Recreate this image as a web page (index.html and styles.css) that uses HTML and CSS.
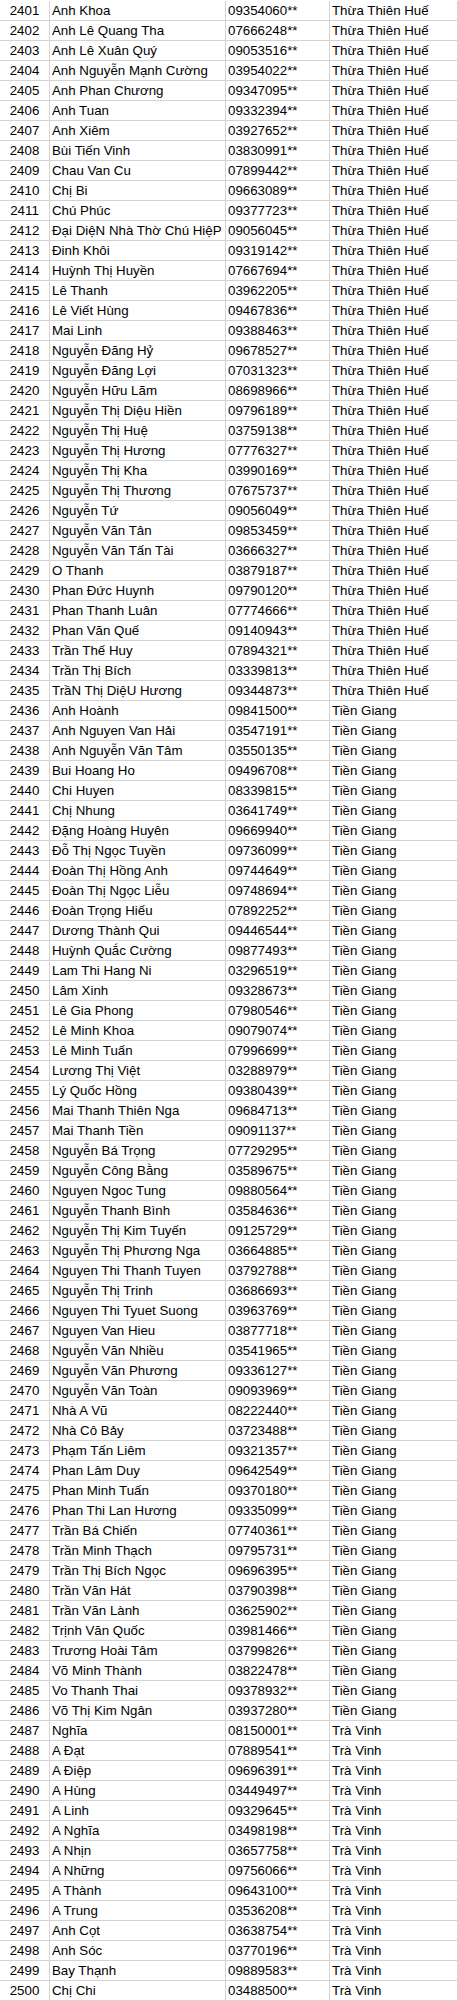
FILE: index.html
```html
<!DOCTYPE html>
<html lang="vi">
<head>
<meta charset="utf-8">
<title>Danh sách</title>
<link rel="stylesheet" href="styles.css">
</head>
<body>
<table class="sheet">
<colgroup><col class="c-no"><col class="c-name"><col class="c-phone"><col class="c-prov"></colgroup>
<tbody id="rows">
<tr><td class="no">2401</td><td>Anh Khoa</td><td>09354060**</td><td>Thừa Thiên Huế</td></tr>
<tr><td class="no">2402</td><td>Anh Lê Quang Tha</td><td>07666248**</td><td>Thừa Thiên Huế</td></tr>
<tr><td class="no">2403</td><td>Anh Lê Xuân Quý</td><td>09053516**</td><td>Thừa Thiên Huế</td></tr>
<tr><td class="no">2404</td><td>Anh Nguyễn Mạnh Cường</td><td>03954022**</td><td>Thừa Thiên Huế</td></tr>
<tr><td class="no">2405</td><td>Anh Phan Chương</td><td>09347095**</td><td>Thừa Thiên Huế</td></tr>
<tr><td class="no">2406</td><td>Anh Tuan</td><td>09332394**</td><td>Thừa Thiên Huế</td></tr>
<tr><td class="no">2407</td><td>Anh Xiêm</td><td>03927652**</td><td>Thừa Thiên Huế</td></tr>
<tr><td class="no">2408</td><td>Bùi Tiến Vinh</td><td>03830991**</td><td>Thừa Thiên Huế</td></tr>
<tr><td class="no">2409</td><td>Chau Van Cu</td><td>07899442**</td><td>Thừa Thiên Huế</td></tr>
<tr><td class="no">2410</td><td>Chị Bi</td><td>09663089**</td><td>Thừa Thiên Huế</td></tr>
<tr><td class="no">2411</td><td>Chú Phúc</td><td>09377723**</td><td>Thừa Thiên Huế</td></tr>
<tr><td class="no">2412</td><td>Đại DiệN Nhà Thờ Chú HiệP</td><td>09056045**</td><td>Thừa Thiên Huế</td></tr>
<tr><td class="no">2413</td><td>Đinh Khôi</td><td>09319142**</td><td>Thừa Thiên Huế</td></tr>
<tr><td class="no">2414</td><td>Huỳnh Thị Huyền</td><td>07667694**</td><td>Thừa Thiên Huế</td></tr>
<tr><td class="no">2415</td><td>Lê Thanh</td><td>03962205**</td><td>Thừa Thiên Huế</td></tr>
<tr><td class="no">2416</td><td>Lê Viết Hùng</td><td>09467836**</td><td>Thừa Thiên Huế</td></tr>
<tr><td class="no">2417</td><td>Mai Linh</td><td>09388463**</td><td>Thừa Thiên Huế</td></tr>
<tr><td class="no">2418</td><td>Nguyễn Đăng Hỷ</td><td>09678527**</td><td>Thừa Thiên Huế</td></tr>
<tr><td class="no">2419</td><td>Nguyễn Đăng Lợi</td><td>07031323**</td><td>Thừa Thiên Huế</td></tr>
<tr><td class="no">2420</td><td>Nguyễn Hữu Lãm</td><td>08698966**</td><td>Thừa Thiên Huế</td></tr>
<tr><td class="no">2421</td><td>Nguyễn Thị Diệu Hiền</td><td>09796189**</td><td>Thừa Thiên Huế</td></tr>
<tr><td class="no">2422</td><td>Nguyễn Thị Huệ</td><td>03759138**</td><td>Thừa Thiên Huế</td></tr>
<tr><td class="no">2423</td><td>Nguyễn Thị Hương</td><td>07776327**</td><td>Thừa Thiên Huế</td></tr>
<tr><td class="no">2424</td><td>Nguyễn Thị Kha</td><td>03990169**</td><td>Thừa Thiên Huế</td></tr>
<tr><td class="no">2425</td><td>Nguyễn Thị Thương</td><td>07675737**</td><td>Thừa Thiên Huế</td></tr>
<tr><td class="no">2426</td><td>Nguyễn Tứ</td><td>09056049**</td><td>Thừa Thiên Huế</td></tr>
<tr><td class="no">2427</td><td>Nguyễn Văn Tân</td><td>09853459**</td><td>Thừa Thiên Huế</td></tr>
<tr><td class="no">2428</td><td>Nguyễn Văn Tấn Tài</td><td>03666327**</td><td>Thừa Thiên Huế</td></tr>
<tr><td class="no">2429</td><td>O Thanh</td><td>03879187**</td><td>Thừa Thiên Huế</td></tr>
<tr><td class="no">2430</td><td>Phan Đức Huynh</td><td>09790120**</td><td>Thừa Thiên Huế</td></tr>
<tr><td class="no">2431</td><td>Phan Thanh Luân</td><td>07774666**</td><td>Thừa Thiên Huế</td></tr>
<tr><td class="no">2432</td><td>Phan Văn Quế</td><td>09140943**</td><td>Thừa Thiên Huế</td></tr>
<tr><td class="no">2433</td><td>Trần Thế Huy</td><td>07894321**</td><td>Thừa Thiên Huế</td></tr>
<tr><td class="no">2434</td><td>Trần Thị Bích</td><td>03339813**</td><td>Thừa Thiên Huế</td></tr>
<tr><td class="no">2435</td><td>TrầN Thị DiệU Hương</td><td>09344873**</td><td>Thừa Thiên Huế</td></tr>
<tr><td class="no">2436</td><td>Anh Hoành</td><td>09841500**</td><td>Tiền Giang</td></tr>
<tr><td class="no">2437</td><td>Anh Nguyen Van Hải</td><td>03547191**</td><td>Tiền Giang</td></tr>
<tr><td class="no">2438</td><td>Anh Nguyễn Văn Tâm</td><td>03550135**</td><td>Tiền Giang</td></tr>
<tr><td class="no">2439</td><td>Bui Hoang Ho</td><td>09496708**</td><td>Tiền Giang</td></tr>
<tr><td class="no">2440</td><td>Chi Huyen</td><td>08339815**</td><td>Tiền Giang</td></tr>
<tr><td class="no">2441</td><td>Chị Nhung</td><td>03641749**</td><td>Tiền Giang</td></tr>
<tr><td class="no">2442</td><td>Đặng Hoàng Huyên</td><td>09669940**</td><td>Tiền Giang</td></tr>
<tr><td class="no">2443</td><td>Đỗ Thị Ngọc Tuyền</td><td>09736099**</td><td>Tiền Giang</td></tr>
<tr><td class="no">2444</td><td>Đoàn Thị Hồng Anh</td><td>09744649**</td><td>Tiền Giang</td></tr>
<tr><td class="no">2445</td><td>Đoàn Thị Ngọc Liễu</td><td>09748694**</td><td>Tiền Giang</td></tr>
<tr><td class="no">2446</td><td>Đoàn Trọng Hiếu</td><td>07892252**</td><td>Tiền Giang</td></tr>
<tr><td class="no">2447</td><td>Dương Thành Qui</td><td>09446544**</td><td>Tiền Giang</td></tr>
<tr><td class="no">2448</td><td>Huỳnh Quắc Cường</td><td>09877493**</td><td>Tiền Giang</td></tr>
<tr><td class="no">2449</td><td>Lam Thi Hang Ni</td><td>03296519**</td><td>Tiền Giang</td></tr>
<tr><td class="no">2450</td><td>Lâm Xinh</td><td>09328673**</td><td>Tiền Giang</td></tr>
<tr><td class="no">2451</td><td>Lê Gia Phong</td><td>07980546**</td><td>Tiền Giang</td></tr>
<tr><td class="no">2452</td><td>Lê Minh Khoa</td><td>09079074**</td><td>Tiền Giang</td></tr>
<tr><td class="no">2453</td><td>Lê Minh Tuấn</td><td>07996699**</td><td>Tiền Giang</td></tr>
<tr><td class="no">2454</td><td>Lương Thị Việt</td><td>03288979**</td><td>Tiền Giang</td></tr>
<tr><td class="no">2455</td><td>Lý Quốc Hồng</td><td>09380439**</td><td>Tiền Giang</td></tr>
<tr><td class="no">2456</td><td>Mai Thanh Thiên Nga</td><td>09684713**</td><td>Tiền Giang</td></tr>
<tr><td class="no">2457</td><td>Mai Thanh Tiền</td><td>09091137**</td><td>Tiền Giang</td></tr>
<tr><td class="no">2458</td><td>Nguyễn Bá Trọng</td><td>07729295**</td><td>Tiền Giang</td></tr>
<tr><td class="no">2459</td><td>Nguyễn Công Bằng</td><td>03589675**</td><td>Tiền Giang</td></tr>
<tr><td class="no">2460</td><td>Nguyen Ngoc Tung</td><td>09880564**</td><td>Tiền Giang</td></tr>
<tr><td class="no">2461</td><td>Nguyễn Thanh Bình</td><td>03584636**</td><td>Tiền Giang</td></tr>
<tr><td class="no">2462</td><td>Nguyễn Thị Kim Tuyến</td><td>09125729**</td><td>Tiền Giang</td></tr>
<tr><td class="no">2463</td><td>Nguyễn Thị Phương Nga</td><td>03664885**</td><td>Tiền Giang</td></tr>
<tr><td class="no">2464</td><td>Nguyen Thi Thanh Tuyen</td><td>03792788**</td><td>Tiền Giang</td></tr>
<tr><td class="no">2465</td><td>Nguyễn Thị Trinh</td><td>03686693**</td><td>Tiền Giang</td></tr>
<tr><td class="no">2466</td><td>Nguyen Thi Tyuet Suong</td><td>03963769**</td><td>Tiền Giang</td></tr>
<tr><td class="no">2467</td><td>Nguyen Van Hieu</td><td>03877718**</td><td>Tiền Giang</td></tr>
<tr><td class="no">2468</td><td>Nguyễn Văn Nhiều</td><td>03541965**</td><td>Tiền Giang</td></tr>
<tr><td class="no">2469</td><td>Nguyễn Văn Phương</td><td>09336127**</td><td>Tiền Giang</td></tr>
<tr><td class="no">2470</td><td>Nguyễn Văn Toàn</td><td>09093969**</td><td>Tiền Giang</td></tr>
<tr><td class="no">2471</td><td>Nhà A Vũ</td><td>08222440**</td><td>Tiền Giang</td></tr>
<tr><td class="no">2472</td><td>Nhà Cô Bảy</td><td>03723488**</td><td>Tiền Giang</td></tr>
<tr><td class="no">2473</td><td>Phạm Tấn Liêm</td><td>09321357**</td><td>Tiền Giang</td></tr>
<tr><td class="no">2474</td><td>Phan Lâm Duy</td><td>09642549**</td><td>Tiền Giang</td></tr>
<tr><td class="no">2475</td><td>Phan Minh Tuấn</td><td>09370180**</td><td>Tiền Giang</td></tr>
<tr><td class="no">2476</td><td>Phan Thi Lan Hương</td><td>09335099**</td><td>Tiền Giang</td></tr>
<tr><td class="no">2477</td><td>Trần Bá Chiến</td><td>07740361**</td><td>Tiền Giang</td></tr>
<tr><td class="no">2478</td><td>Trần Minh Thạch</td><td>09795731**</td><td>Tiền Giang</td></tr>
<tr><td class="no">2479</td><td>Trần Thị Bích Ngọc</td><td>09696395**</td><td>Tiền Giang</td></tr>
<tr><td class="no">2480</td><td>Trần Văn Hát</td><td>03790398**</td><td>Tiền Giang</td></tr>
<tr><td class="no">2481</td><td>Trần Văn Lành</td><td>03625902**</td><td>Tiền Giang</td></tr>
<tr><td class="no">2482</td><td>Trịnh Văn Quốc</td><td>03981466**</td><td>Tiền Giang</td></tr>
<tr><td class="no">2483</td><td>Trương Hoài Tâm</td><td>03799826**</td><td>Tiền Giang</td></tr>
<tr><td class="no">2484</td><td>Võ Minh Thành</td><td>03822478**</td><td>Tiền Giang</td></tr>
<tr><td class="no">2485</td><td>Vo Thanh Thai</td><td>09378932**</td><td>Tiền Giang</td></tr>
<tr><td class="no">2486</td><td>Võ Thị Kim Ngân</td><td>03937280**</td><td>Tiền Giang</td></tr>
<tr><td class="no">2487</td><td>Nghĩa</td><td>08150001**</td><td>Trà Vinh</td></tr>
<tr><td class="no">2488</td><td>A Đạt</td><td>07889541**</td><td>Trà Vinh</td></tr>
<tr><td class="no">2489</td><td>A Điệp</td><td>09696391**</td><td>Trà Vinh</td></tr>
<tr><td class="no">2490</td><td>A Hùng</td><td>03449497**</td><td>Trà Vinh</td></tr>
<tr><td class="no">2491</td><td>A Linh</td><td>09329645**</td><td>Trà Vinh</td></tr>
<tr><td class="no">2492</td><td>A Nghĩa</td><td>03498198**</td><td>Trà Vinh</td></tr>
<tr><td class="no">2493</td><td>A Nhịn</td><td>03657758**</td><td>Trà Vinh</td></tr>
<tr><td class="no">2494</td><td>A Những</td><td>09756066**</td><td>Trà Vinh</td></tr>
<tr><td class="no">2495</td><td>A Thành</td><td>09643100**</td><td>Trà Vinh</td></tr>
<tr><td class="no">2496</td><td>A Trung</td><td>03536208**</td><td>Trà Vinh</td></tr>
<tr><td class="no">2497</td><td>Anh Cọt</td><td>03638754**</td><td>Trà Vinh</td></tr>
<tr><td class="no">2498</td><td>Anh Sóc</td><td>03770196**</td><td>Trà Vinh</td></tr>
<tr><td class="no">2499</td><td>Bay Thạnh</td><td>09889583**</td><td>Trà Vinh</td></tr>
<tr><td class="no">2500</td><td>Chị Chi</td><td>03488500**</td><td>Trà Vinh</td></tr>
</tbody>
</table>
</body>
</html>
```
FILE: styles.css
```css
html, body {
  margin: 0;
  background: #ffffff;
}
body {
  padding-top: 1px;
  font-family: "Liberation Sans", Arial, sans-serif;
  font-size: 13.3px;
  color: #000000;
}
.sheet {
  border-collapse: separate;
  border-spacing: 0;
  table-layout: fixed;
  width: 458px;
}
.c-no { width: 50px; }
.c-name { width: 176px; }
.c-phone { width: 104px; }
.c-prov { width: 128px; }
.sheet td {
  height: 18px;
  padding: 1px 0 0 2px;
  line-height: 18px;
  border-right: 1px solid #d4d4d4;
  border-bottom: 1px solid #d4d4d4;
  white-space: nowrap;
  overflow: hidden;
  vertical-align: top;
  box-sizing: content-box;
}
.sheet td.no {
  text-align: center;
  padding-left: 0;
}
```
